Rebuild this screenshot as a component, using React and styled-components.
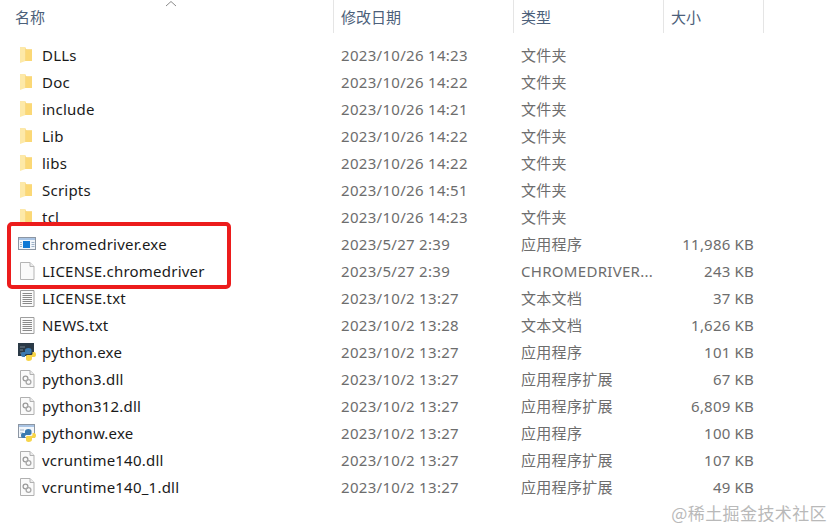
import styled, { createGlobalStyle } from "styled-components";

const COLUMNS = "333px 180px 150px 100px 71px";

const files = [
  { name: "DLLs", date: "2023/10/26 14:23", type: "文件夹", size: "", icon: "folder" },
  { name: "Doc", date: "2023/10/26 14:22", type: "文件夹", size: "", icon: "folder" },
  { name: "include", date: "2023/10/26 14:21", type: "文件夹", size: "", icon: "folder" },
  { name: "Lib", date: "2023/10/26 14:22", type: "文件夹", size: "", icon: "folder" },
  { name: "libs", date: "2023/10/26 14:22", type: "文件夹", size: "", icon: "folder" },
  { name: "Scripts", date: "2023/10/26 14:51", type: "文件夹", size: "", icon: "folder" },
  { name: "tcl", date: "2023/10/26 14:23", type: "文件夹", size: "", icon: "folder" },
  { name: "chromedriver.exe", date: "2023/5/27 2:39", type: "应用程序", size: "11,986 KB", icon: "exe" },
  { name: "LICENSE.chromedriver", date: "2023/5/27 2:39", type: "CHROMEDRIVER...", size: "243 KB", icon: "blank" },
  { name: "LICENSE.txt", date: "2023/10/2 13:27", type: "文本文档", size: "37 KB", icon: "text" },
  { name: "NEWS.txt", date: "2023/10/2 13:28", type: "文本文档", size: "1,626 KB", icon: "text" },
  { name: "python.exe", date: "2023/10/2 13:27", type: "应用程序", size: "101 KB", icon: "python" },
  { name: "python3.dll", date: "2023/10/2 13:27", type: "应用程序扩展", size: "67 KB", icon: "dll" },
  { name: "python312.dll", date: "2023/10/2 13:27", type: "应用程序扩展", size: "6,809 KB", icon: "dll" },
  { name: "pythonw.exe", date: "2023/10/2 13:27", type: "应用程序", size: "100 KB", icon: "pythonw" },
  { name: "vcruntime140.dll", date: "2023/10/2 13:27", type: "应用程序扩展", size: "107 KB", icon: "dll" },
  { name: "vcruntime140_1.dll", date: "2023/10/2 13:27", type: "应用程序扩展", size: "49 KB", icon: "dll" },
];

const GlobalStyle = createGlobalStyle`
  html, body {
    margin: 0;
    background: #ffffff;
  }
  body {
    font-family: "Noto Sans", "Noto Sans CJK SC", sans-serif;
  }
`;

const Page = styled.div`
  position: relative;
  width: 834px;
  height: 530px;
  overflow: hidden;
  background: #ffffff;
`;

const SortArrow = styled.svg`
  position: absolute;
  left: 165px;
  top: 0;
`;

const Header = styled.div`
  display: grid;
  grid-template-columns: ${COLUMNS};
  height: 33px;
  margin-bottom: 8px;
  box-sizing: border-box;
`;

const HeaderCell = styled.div`
  display: flex;
  align-items: center;
  padding-left: ${(p) => (p.$first ? "15px" : "7px")};
  border-left: ${(p) => (p.$first ? "none" : "1px solid #e5e5e5")};
  color: #4c607a;
  font-size: 15px;
`;

const Row = styled.div`
  display: grid;
  grid-template-columns: ${COLUMNS};
  height: 27px;
  align-items: center;
  font-size: 15px;
`;

const NameCell = styled.div`
  display: flex;
  align-items: center;
  padding-left: 18px;
  color: #1a1a1a;
  letter-spacing: 0.22px;
`;

const IconSlot = styled.span`
  display: flex;
  flex: none;
  width: 18px;
  height: 18px;
  margin-right: 6px;
`;

const Cell = styled.div`
  padding-left: 8px;
  color: #6d6d6d;
  font-size: 15px;
  letter-spacing: 0.3px;
  white-space: nowrap;
`;

const SizeCell = styled.div`
  padding-right: 9px;
  text-align: right;
  color: #6d6d6d;
  font-size: 15px;
  letter-spacing: 0.2px;
  white-space: nowrap;
`;

const Highlight = styled.div`
  position: absolute;
  left: 7px;
  top: 222px;
  width: 224px;
  height: 67px;
  box-sizing: border-box;
  border: 4px solid #ec1c1c;
  border-radius: 5px;
`;

const Watermark = styled.div`
  position: absolute;
  right: 7px;
  bottom: 5px;
  color: #b9b9b9;
  font-family: "Noto Sans CJK SC", sans-serif;
  font-size: 17px;
  letter-spacing: 0.4px;
  white-space: nowrap;
`;

const FolderIcon = () => (
  <svg width="18" height="18" viewBox="0 0 18 18">
    <path d="M2 1.500h5l1.500 2H14v11.500H2z" fill="#f4c95f" />
    <path d="M8 3.500h6V15H8z" fill="#fbd876" />
    <path d="M2 1.500l5.500-.5v14l-5.500 2z" fill="#fde9a8" />
  </svg>
);

const BlankIcon = () => (
  <svg width="18" height="18" viewBox="0 0 18 18">
    <path d="M2.500.5h9.500l4 4v13h-13.500z" fill="#fafafa" stroke="#b5b5b5" />
    <path d="M12 .5v4h4" fill="#ececec" stroke="#b5b5b5" />
  </svg>
);

const ExeIcon = () => (
  <svg width="18" height="18" viewBox="0 0 18 18">
    <rect x="0.5" y="2.5" width="17" height="12" fill="#f2f6fb" stroke="#8c96a3" />
    <rect x="1" y="3" width="16" height="2" fill="#a9c4e4" />
    <rect x="5" y="6" width="7" height="7" fill="#0f78d4" />
    <path d="M13.500 7.500h3M13.500 9.500h3M13.500 11.500h3M2 7.500h2M2 9.500h2M2 11.500h2" stroke="#9fb2c8" />
  </svg>
);

const TextIcon = () => (
  <svg width="18" height="18" viewBox="0 0 18 18">
    <path d="M2.500 1.500h13.500v16h-13.500z" fill="#fbfbfb" stroke="#9e9e9e" />
    <path d="M4.500 4.500h9.500M4.500 6.500h9.500M4.500 8.500h9.500M4.500 10.500h9.500M4.500 12.500h9.500M4.500 14.500h9.500" stroke="#8a8a8a" />
  </svg>
);

const DllIcon = () => (
  <svg width="18" height="18" viewBox="0 0 18 18">
    <path d="M2.500.5h9.500l4 4v13h-13.500z" fill="#fafafa" stroke="#b0b0b0" />
    <path d="M12 .5v4h4" fill="#ececec" stroke="#b0b0b0" />
    <circle cx="7.500" cy="8.500" r="2.400" fill="none" stroke="#9a9a9a" strokeWidth="1.300" />
    <circle cx="10.500" cy="12" r="2.400" fill="none" stroke="#a8a8a8" strokeWidth="1.300" />
  </svg>
);

const PythonMark = () => (
  <>
    <path d="M10.500 5c-2.500 0-3.500 1-3.500 2.500V9H4.800C3.500 9 3 10.200 3 11.500S3.600 14 5 14h2v-1.500c0-1 .8-1.500 1.800-1.500h3c1 0 1.700-.7 1.700-1.700V7c0-1.200-1.400-2-3-2z" fill="#3b7ab0" />
    <path d="M10.500 18c2.500 0 3.500-1 3.500-2.500V14h2.200c1.300 0 1.800-1.200 1.800-2.500S17.400 9 16 9h-1.500v1.500c0 1-.8 1.500-1.800 1.500H9.500c-1 0-1.500.7-1.500 1.700V16c0 1.200 1 2 2.500 2z" fill="#f7d54a" />
  </>
);

const PythonIcon = () => (
  <svg width="18" height="18" viewBox="0 0 18 18">
    <rect x="0" y="0" width="16" height="13" fill="#2b3a47" />
    <path d="M2 4h5M2 7h3M2 10h3" stroke="#76848f" />
    <PythonMark />
  </svg>
);

const PythonwIcon = () => (
  <svg width="18" height="18" viewBox="0 0 18 18">
    <rect x="0.5" y="0.5" width="16" height="13" fill="#f2f6fb" stroke="#8c96a3" />
    <rect x="1" y="1" width="15" height="2" fill="#a9c4e4" />
    <path d="M2 6h4M2 9h3" stroke="#9fb2c8" />
    <PythonMark />
  </svg>
);

const icons = {
  folder: FolderIcon,
  blank: BlankIcon,
  exe: ExeIcon,
  text: TextIcon,
  dll: DllIcon,
  python: PythonIcon,
  pythonw: PythonwIcon,
};

const FileRow = ({ file }) => {
  const Icon = icons[file.icon];
  return (
    <Row>
      <NameCell>
        <IconSlot>
          <Icon />
        </IconSlot>
        {file.name}
      </NameCell>
      <Cell>{file.date}</Cell>
      <Cell>{file.type}</Cell>
      <SizeCell>{file.size}</SizeCell>
    </Row>
  );
};

const App = () => (
  <Page>
    <GlobalStyle />
    <SortArrow width="12" height="7" viewBox="0 0 12 7">
      <path d="M1 6l5-4.500L11 6" fill="none" stroke="#8a8a8a" />
    </SortArrow>
    <Header>
      <HeaderCell $first>名称</HeaderCell>
      <HeaderCell>修改日期</HeaderCell>
      <HeaderCell>类型</HeaderCell>
      <HeaderCell>大小</HeaderCell>
      <HeaderCell />
    </Header>
    {files.map((file) => (
      <FileRow key={file.name} file={file} />
    ))}
    <Highlight />
    <Watermark>@稀土掘金技术社区</Watermark>
  </Page>
);

export default App;
